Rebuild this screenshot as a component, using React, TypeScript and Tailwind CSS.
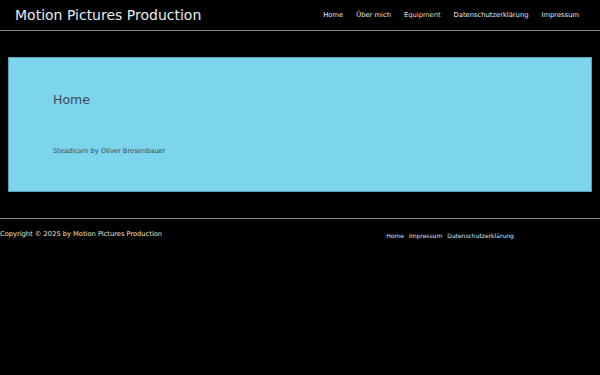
export default function App() {
  const nav = ["Home", "Über mich", "Equipment", "Datenschutzerklärung", "Impressum"];
  return (
    <div className="min-h-[375px] w-[600px] bg-black font-['DejaVu_Sans',sans-serif] text-[#e8e8e8]">
      {/* Header */}
      <header className="flex h-[31px] items-center justify-between border-b border-[#8a8a8a] pl-[15px] pr-[21px]">
        <div className="text-[14px] leading-none text-[#e6eef5]">Motion Pictures Production</div>
        <nav className="flex items-center gap-[13px] text-[6.75px] leading-none">
          {nav.map((n) => (
            <span key={n} className={n === "Equipment" ? "text-[#f0dcb8]" : "text-[#e4ebf2]"}>
              {n}
            </span>
          ))}
        </nav>
      </header>

      {/* Content */}
      <main className="px-2 pt-[26px]">
        <section className="h-[135px] border border-[#5a9fb5] bg-[#7dd4ed] px-[44px] pt-[36px]">
          <h1 className="text-[12.5px] leading-none text-[#3c4a52]">Home</h1>
          <p className="mt-[41px] text-[6.7px] leading-none text-[#3a4a55]">Steadicam by Oliver Brosenbauer</p>
        </section>
      </main>

      {/* Footer */}
      <footer className="mt-[26px] border-t border-[#8a8a8a]">
        <div className="flex pt-[12px]">
          <div className="w-1/2 text-[6.7px] leading-none text-[#f3e6c4]">
            Copyright © 2025 by Motion Pictures Production
          </div>
          <div className="flex w-1/2 justify-center gap-[5px] pt-[2px] text-[6px] leading-none text-[#dde6f0]">
            <span>Home</span>
            <span>Impressum</span>
            <span>Datenschutzerklärung</span>
          </div>
        </div>
      </footer>
    </div>
  );
}
